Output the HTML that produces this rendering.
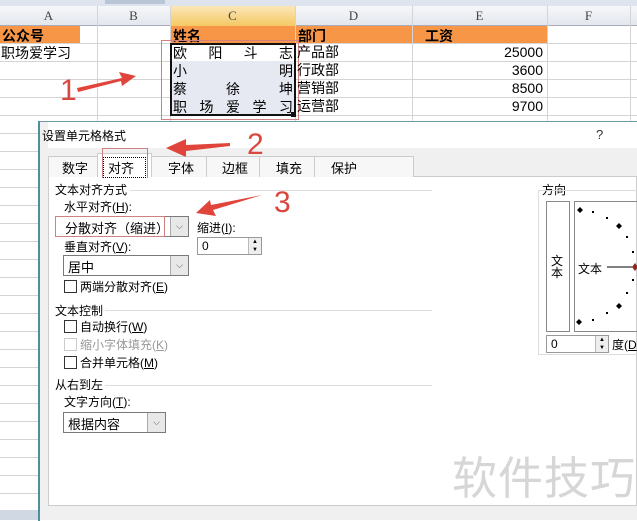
<!DOCTYPE html>
<html><head><meta charset="utf-8"><style>
*{margin:0;padding:0;box-sizing:border-box}
body{width:637px;height:520px;overflow:hidden;background:#fff;position:relative;font-family:"Liberation Sans","Noto Sans CJK SC",sans-serif;font-size:13px;color:#000}
.a{position:absolute;white-space:nowrap}
.hl{position:absolute;height:1px;background:#d4d4d4}
.vl{position:absolute;width:1px;background:#d4d4d4}
.cb{position:absolute;width:13px;height:13px;border:1px solid #333;background:#fff}
.sel{position:absolute;border:1px solid #7a7a7a;background:#fff;height:20px}
.dd{position:absolute;right:0;top:0;width:18px;height:100%;background:#e8e8e8;border-left:1px solid #aaa;font-size:9px;text-align:center;line-height:18px;color:#555}
.grp{position:absolute;height:1px;background:#ddd}
</style></head><body>
<div class="a" style="left:0;top:0;width:637px;height:6px;background:#dde4ee"></div>
<div class="a" style="left:105px;top:0;width:60px;height:4px;background:#b8c6d8"></div>
<div class="a" style="left:0;top:6px;width:637px;height:20px;background:linear-gradient(#f6f7f9,#e3e7ee);border-bottom:1px solid #aab"></div>
<div class="a" style="left:170px;top:6px;width:125px;height:20px;background:linear-gradient(#fbe7b8,#f5c964)"></div>
<div class="a" style="left:0;top:8px;width:97px;text-align:center;color:#444;font-family:'Liberation Serif',serif">A</div>
<div class="a" style="left:97px;top:8px;width:73px;text-align:center;color:#444;font-family:'Liberation Serif',serif">B</div>
<div class="a" style="left:170px;top:8px;width:125px;text-align:center;color:#444;font-family:'Liberation Serif',serif">C</div>
<div class="a" style="left:295px;top:8px;width:117px;text-align:center;color:#444;font-family:'Liberation Serif',serif">D</div>
<div class="a" style="left:412px;top:8px;width:135px;text-align:center;color:#444;font-family:'Liberation Serif',serif">E</div>
<div class="a" style="left:547px;top:8px;width:83px;text-align:center;color:#444;font-family:'Liberation Serif',serif">F</div>
<div class="a" style="left:0;top:26px;width:80px;height:17px;background:#f79646"></div>
<div class="a" style="left:170px;top:26px;width:377px;height:17px;background:#f79646"></div>
<div class="vl" style="left:97px;top:6px;height:116px"></div>
<div class="vl" style="left:170px;top:6px;height:116px"></div>
<div class="vl" style="left:295px;top:6px;height:116px"></div>
<div class="vl" style="left:412px;top:6px;height:116px"></div>
<div class="vl" style="left:547px;top:6px;height:116px"></div>
<div class="vl" style="left:630px;top:6px;height:116px"></div>
<div class="hl" style="left:0;top:43px;width:637px"></div>
<div class="hl" style="left:0;top:61px;width:637px"></div>
<div class="hl" style="left:0;top:79px;width:637px"></div>
<div class="hl" style="left:0;top:97px;width:637px"></div>
<div class="hl" style="left:0;top:115px;width:637px"></div>
<div class="hl" style="left:0;top:133px;width:38px"></div>
<div class="hl" style="left:0;top:151px;width:38px"></div>
<script>for(let y=169;y<510;y+=18)document.write('<div class="hl" style="left:0;top:'+y+'px;width:38px"></div>')</script>
<div class="a" style="left:0;top:510px;width:40px;height:10px;background:#cfd8e3"></div>
<div class="a" style="left:2px;top:26px;font-weight:bold;font-size:14px">公众号</div>
<div class="a" style="left:173px;top:26px;font-weight:bold;font-size:14px">姓名</div>
<div class="a" style="left:298px;top:26px;font-weight:bold;font-size:14px">部门</div>
<div class="a" style="left:425px;top:26px;font-weight:bold;font-size:14px">工资</div>
<div class="a" style="left:1px;top:43px;font-size:14px">职场爱学习</div>
<div class="a" style="left:171px;top:44px;width:124px;height:72px;background:#e6e9f2"></div>
<div class="a" style="left:171px;top:44px;width:124px;height:17px;background:#fff"></div>
<div class="a" style="left:170px;top:43px;width:126px;height:73px;border:2px solid #111"></div>
<div class="a" style="left:291px;top:112px;width:5px;height:5px;background:#111"></div>
<div class="a" style="left:161px;top:40px;width:138px;height:80px;border:1px solid #d08080"></div>
<div class="a" style="left:173px;top:43px;width:120px;font-size:14px;display:flex;justify-content:space-between"><span>欧</span><span>阳</span><span>斗</span><span>志</span></div>
<div class="a" style="left:173px;top:61px;width:120px;font-size:14px;display:flex;justify-content:space-between"><span>小</span><span>明</span></div>
<div class="a" style="left:173px;top:79px;width:120px;font-size:14px;display:flex;justify-content:space-between"><span>蔡</span><span>徐</span><span>坤</span></div>
<div class="a" style="left:173px;top:97px;width:120px;font-size:14px;display:flex;justify-content:space-between"><span>职</span><span>场</span><span>爱</span><span>学</span><span>习</span></div>
<div class="a" style="left:297px;top:43px;font-size:14px;line-height:18px">产品部<br>行政部<br>营销部<br>运营部</div>
<div class="a" style="left:440px;top:43px;width:103px;text-align:right;font-size:14px;line-height:18px">25000<br>3600<br>8500<br>9700</div>
<!-- dialog -->
<div class="a" style="left:38px;top:121px;width:600px;height:400px;background:#fff;border-left:2px solid #4f8f9a;border-top:1px solid #6a9aa8"></div>
<div class="a" style="left:40px;top:148px;width:597px;height:28px;background:#f0f0f0"></div>
<div class="a" style="left:40px;top:122px;width:8px;height:398px;background:#f0f0f0"></div>
<div class="a" style="left:40px;top:506px;width:597px;height:14px;background:#f0f0f0"></div>
<div class="a" style="left:48px;top:176px;width:589px;height:330px;background:#fff;border:1px solid #ccc"></div>
<div class="a" style="left:42px;top:127px;font-size:12px">设置单元格格式</div>
<div class="a" style="left:596px;top:127px;font-size:13px;color:#333">?</div>
<div class="a" style="left:48px;top:156px;width:366px;height:21px;border:1px solid #ccc;border-bottom:none;background:#f7f7f7"></div>
<div class="a" style="left:97px;top:153px;width:55px;height:24px;border:1px solid #ccc;border-bottom:none;background:#fff"></div>
<div class="a" style="left:62px;top:158px;font-size:13px">数字</div>
<div class="a" style="left:103px;top:157px;font-size:13px;border:1px dotted #000;padding:0 4px;width:43px">对齐</div>
<div class="a" style="left:168px;top:158px;font-size:13px">字体</div>
<div class="a" style="left:222px;top:158px;font-size:13px">边框</div>
<div class="a" style="left:276px;top:158px;font-size:13px">填充</div>
<div class="a" style="left:331px;top:158px;font-size:13px">保护</div>
<div class="vl" style="left:206px;top:156px;height:21px;background:#ccc"></div>
<div class="vl" style="left:259px;top:156px;height:21px;background:#ccc"></div>
<div class="vl" style="left:314px;top:156px;height:21px;background:#ccc"></div>
<div class="a" style="left:102px;top:148px;width:46px;height:30px;border:1px solid #d08080;border-bottom:none"></div>
<div class="a" style="left:55px;top:181px;font-size:12px">文本对齐方式</div>
<div class="grp" style="left:130px;top:190px;width:302px"></div>
<div class="a" style="left:64px;top:198px;font-size:12px">水平对齐(<u>H</u>):</div>
<div class="sel" style="left:55px;top:216px;width:134px;height:21px"><div class="a" style="left:9px;top:1px;font-size:13px">分散对齐（缩进）</div><div class="dd">⌵</div></div>
<div class="a" style="left:55px;top:216px;width:110px;height:21px;border:1px solid #d08080"></div>
<div class="a" style="left:197px;top:219px;font-size:12px">缩进(<u>I</u>):</div>
<div class="a" style="left:197px;top:237px;width:65px;height:18px;border:1px solid #999"><span class="a" style="left:4px;top:1px;font-size:12px">0</span><span class="a" style="right:0;top:0;width:13px;height:16px;background:#eee;border-left:1px solid #bbb;font-size:6px;line-height:8px;text-align:center">▲<br>▼</span></div>
<div class="a" style="left:64px;top:238px;font-size:12px">垂直对齐(<u>V</u>):</div>
<div class="sel" style="left:63px;top:255px;width:126px;height:21px"><div class="a" style="left:4px;top:1px;font-size:13px">居中</div><div class="dd">⌵</div></div>
<div class="cb" style="left:64px;top:280px"></div><div class="a" style="left:80px;top:278px;font-size:12px">两端分散对齐(<u>E</u>)</div>
<div class="a" style="left:55px;top:302px;font-size:12px">文本控制</div>
<div class="grp" style="left:105px;top:310px;width:327px"></div>
<div class="cb" style="left:64px;top:320px"></div><div class="a" style="left:80px;top:318px;font-size:12px">自动换行(<u>W</u>)</div>
<div class="cb" style="left:64px;top:338px;border-color:#ccc"></div><div class="a" style="left:80px;top:336px;font-size:12px;color:#999">缩小字体填充(<u>K</u>)</div>
<div class="cb" style="left:64px;top:356px"></div><div class="a" style="left:80px;top:354px;font-size:12px">合并单元格(<u>M</u>)</div>
<div class="a" style="left:55px;top:376px;font-size:12px">从右到左</div>
<div class="grp" style="left:105px;top:385px;width:327px"></div>
<div class="a" style="left:64px;top:393px;font-size:12px">文字方向(<u>T</u>):</div>
<div class="sel" style="left:63px;top:412px;width:103px;height:21px"><div class="a" style="left:4px;top:1px;font-size:13px">根据内容</div><div class="dd">⌵</div></div>
<!-- direction -->
<div class="a" style="left:542px;top:181px;font-size:12px">方向</div>
<div class="a" style="left:538px;top:190px;width:100px;height:165px;border:1px solid #ddd;border-right:none"></div>
<div class="a" style="left:546px;top:201px;width:24px;height:131px;border:1px solid #888"></div>
<div class="a" style="left:551px;top:255px;font-size:12px;line-height:12px">文<br>本</div>
<div class="a" style="left:574px;top:201px;width:64px;height:131px;border:1px solid #888;border-right:none"></div>
<div class="a" style="left:578px;top:260px;font-size:12px">文本</div>
<svg class="a" style="left:574px;top:201px" width="64" height="131">
<line x1="33" y1="66" x2="60" y2="66" stroke="#000"/>
<path d="M6 6l3 3-3 3-3-3z M45 22l3 3-3 3-3-3z M45 102l3 3-3 3-3-3z M5 118l3 3-3 3-3-3z" fill="#000"/>
<path d="M61 62l3 4-3 4-3-4z" fill="#8b2a20"/>
<g fill="#000"><rect x="18" y="10" width="2" height="2"/><rect x="32" y="16" width="2" height="2"/><rect x="52" y="35" width="2" height="2"/><rect x="58" y="50" width="2" height="2"/><rect x="58" y="78" width="2" height="2"/><rect x="52" y="91" width="2" height="2"/><rect x="32" y="111" width="2" height="2"/><rect x="18" y="118" width="2" height="2"/></g>
</svg>
<div class="a" style="left:546px;top:335px;width:63px;height:18px;border:1px solid #999"><span class="a" style="left:4px;top:1px;font-size:12px">0</span><span class="a" style="right:0;top:0;width:13px;height:16px;background:#eee;border-left:1px solid #bbb;font-size:6px;line-height:8px;text-align:center">▲<br>▼</span></div>
<div class="a" style="left:612px;top:336px;font-size:12px">度(<u>D</u></div>
<div class="a" style="left:452px;top:442px;font-size:45px;color:#d6d6d6;letter-spacing:1px">软件技巧</div>
<svg class="a" style="left:0;top:0" width="637" height="520">
<path d="M77 88 L122 78 L119 72 L136 76 L122 86 L121 81 L78 92z" fill="#e0443a"/>
<path d="M166 148 L186 139 L186 145 L230 143 L230 146 L186 151 L186 157z" fill="#e0443a"/>
<path d="M196 213 L210 200 L211 205 L262 195 L213 210 L216 216z" fill="#e0443a"/>
<g fill="#d9473f" font-family="Liberation Sans,sans-serif" font-size="30">
<text x="60" y="100">1</text><text x="247" y="154">2</text><text x="274" y="212">3</text></g>
</svg>
</body></html>
